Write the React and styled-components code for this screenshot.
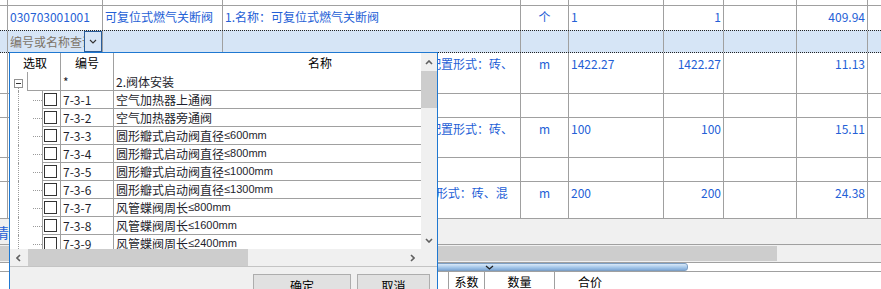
import React from "react";
import styled, { createGlobalStyle } from "styled-components";

const colors = {
  grid: "#a0a0a0",
  blue: "#2460d6",
  ink: "#1e1e2c",
  filter: "#d6e5f6",
  track: "#f0f0f0",
  thumb: "#cdcdcd",
  drop: "#1f78d1",
  dots: "#9a9a9a",
};

const COLS = "8px 95px 120px 298px 48px 95px 60px 73px 71px 1fr";

const GlobalStyle = createGlobalStyle`
  html, body { margin: 0; padding: 0; background: #fff; }
  body {
    font-family: "Noto Sans CJK SC", "Noto Sans", sans-serif;
    font-size: 12px;
    overflow: hidden;
  }
`;

const Screen = styled.div`
  position: relative;
  width: 881px;
  height: 289px;
  overflow: hidden;
  display: flex;
  flex-direction: column;
`;

const Row = styled.div`
  display: grid;
  grid-template-columns: ${COLS};
  flex: none;
  height: ${({ $h }) => $h}px;
  box-sizing: border-box;
  background: ${({ $filter }) => ($filter ? colors.filter : "#fff")};
  border-top: ${({ $filter }) => ($filter ? "1px dotted #222" : "none")};
  border-bottom: ${({ $filter, $noLine }) =>
    $filter ? "1px dotted #222" : $noLine ? "none" : `1px solid ${colors.grid}`};
`;

const Cell = styled.div`
  box-sizing: border-box;
  border-right: ${({ $last }) => ($last ? "none" : `1px solid ${colors.grid}`)};
  padding: 3px 2px 0;
  color: ${colors.blue};
  text-align: ${({ $align }) => $align || "left"};
  white-space: ${({ $wrap }) => ($wrap ? "normal" : "nowrap")};
  word-break: ${({ $wrap }) => ($wrap ? "break-all" : "normal")};
  overflow: hidden;
  line-height: 16px;
`;

const FilterCell = styled.div`
  box-sizing: border-box;
  border-right: 1px solid ${colors.grid};
  display: flex;
  overflow: hidden;
`;

const FilterInput = styled.div`
  width: 76px;
  padding-left: 2px;
  box-sizing: border-box;
  line-height: 21px;
  color: #7d7468;
  white-space: nowrap;
  overflow: hidden;
`;

const FilterButton = styled.div`
  width: 18px;
  box-sizing: border-box;
  border: 1px solid #2a5d9a;
  background: ${colors.filter};
  display: flex;
  align-items: center;
  justify-content: center;
`;

const Band = styled.div`
  flex: none;
  height: 26px;
  box-sizing: border-box;
  background: ${colors.track};
  border-bottom: 1px solid ${colors.grid};
  display: flex;
  align-items: center;
  overflow: hidden;
`;

const TabText = styled.span`
  margin-left: -5px;
  font-size: 14px;
  color: ${colors.blue};
  white-space: nowrap;
`;

const MainScroll = styled.div`
  flex: none;
  height: 17px;
  background: ${colors.track};
  display: flex;
`;

const MainThumb = styled.div`
  width: 777px;
  margin: 1px 0;
  background: ${colors.thumb};
`;

const Splitter = styled.div`
  flex: none;
  height: 10px;
  box-sizing: border-box;
  border-top: 1px solid ${colors.grid};
  border-bottom: 1px solid ${colors.grid};
  background: #fff;
  display: flex;
`;

const SplitBar = styled.div`
  margin-left: 120px;
  width: 568px;
  box-sizing: border-box;
  border: 1px solid #7d9fc4;
  border-radius: 0 3px 3px 0;
  background: linear-gradient(to bottom, #d9e9f8, #a6c8ea 55%, #80aad8);
  display: flex;
  align-items: center;
  padding-left: 364px;
`;

const FootHead = styled.div`
  flex: 1;
  display: grid;
  grid-template-columns: 449px 36px 70px 1fr;
  background: #fff;
`;

const HeadCell = styled.div`
  box-sizing: border-box;
  border-right: ${({ $last }) => ($last ? "none" : `1px solid ${colors.grid}`)};
  color: #000;
  line-height: 20px;
  text-align: ${({ $align }) => $align || "center"};
  padding-left: ${({ $pad }) => $pad || 0}px;
`;

/* dropdown */

const Dropdown = styled.div`
  position: absolute;
  left: 9px;
  top: 52px;
  width: 429px;
  height: 250px;
  box-sizing: border-box;
  border: 1px solid ${colors.drop};
  background: ${colors.track};
  display: flex;
  flex-direction: column;
  overflow: hidden;
`;

const DropBody = styled.div`
  flex: none;
  height: 196px;
  display: flex;
`;

const List = styled.div`
  width: 411px;
  background: #fff;
  overflow: hidden;
  display: flex;
  flex-direction: column;
`;

const ListHead = styled.div`
  flex: none;
  height: 19px;
  display: grid;
  grid-template-columns: 51px 53px 1fr;
  color: #000;
`;

const ListHeadCell = styled.div`
  box-sizing: border-box;
  border-right: ${({ $last }) => ($last ? "none" : `1px solid ${colors.grid}`)};
  line-height: 19px;
  text-align: ${({ $pad }) => ($pad ? "left" : "center")};
  padding-left: ${({ $pad }) => $pad || 0}px;
  white-space: nowrap;
  overflow: hidden;
`;

const TreeRow = styled.div`
  flex: none;
  height: ${({ $h }) => $h}px;
  display: grid;
  grid-template-columns: ${({ $indent }) => `${$indent}px 19px 53px 1fr`};
`;

const RootRow = styled(TreeRow)`
  grid-template-columns: 17px 34px 53px 1fr;
`;

const TreeCell = styled.div`
  box-sizing: border-box;
  border-bottom: 1px solid ${colors.grid};
  border-left: ${({ $first }) => ($first ? `1px solid ${colors.grid}` : "none")};
  border-right: ${({ $last }) => ($last ? "none" : `1px solid ${colors.grid}`)};
  padding-left: 2px;
  line-height: 17px;
  color: ${colors.ink};
  white-space: nowrap;
  overflow: hidden;
  display: flex;
  align-items: center;
`;

const RootIndent = styled.div`
  display: flex;
  flex-direction: column;
  padding: 7px 0 0 4px;
`;

const ExpandBox = styled.div`
  width: 9px;
  height: 9px;
  box-sizing: border-box;
  border: 1px solid #919191;
  background: #fff;
  display: flex;
  align-items: center;
  justify-content: center;
  &::before {
    content: "";
    width: 5px;
    height: 1px;
    background: #333;
  }
`;

const Stem = styled.div`
  flex: 1;
  margin-left: 4px;
  border-left: 1px dotted ${colors.dots};
`;

const ChildIndent = styled.div`
  display: flex;
  align-items: center;
`;

const ChildStem = styled.div`
  align-self: stretch;
  width: 15px;
  margin-left: 8px;
  box-sizing: border-box;
  border-left: 1px dotted ${colors.dots};
`;

const Connector = styled.div`
  width: 9px;
  border-top: 1px dotted ${colors.dots};
`;

const CheckCell = styled(TreeCell)`
  padding-left: 1px;
`;

const Checkbox = styled.div`
  width: 13px;
  height: 13px;
  box-sizing: border-box;
  border: 1px solid #333;
  background: #fff;
`;

const Small = styled.span`
  font-family: "Liberation Sans", Arial, sans-serif;
  font-size: 11px;
`;

const VScroll = styled.div`
  width: 16px;
  background: ${colors.track};
  display: flex;
  flex-direction: column;
`;

const Arrow = styled.div`
  flex: none;
  width: ${({ $w }) => ($w ? `${$w}px` : "auto")};
  height: ${({ $h }) => ($h ? `${$h}px` : "auto")};
  display: flex;
  align-items: center;
  justify-content: center;
`;

const VThumb = styled.div`
  height: 37px;
  background: ${colors.thumb};
`;

const Spacer = styled.div`
  flex: 1;
`;

const HScrollRow = styled.div`
  flex: none;
  height: 17px;
  display: flex;
`;

const HTrack = styled.div`
  width: 411px;
  display: flex;
  background: ${colors.track};
`;

const HThumb = styled.div`
  width: 220px;
  margin-left: 1px;
  background: ${colors.thumb};
`;

const Corner = styled.div`
  width: 16px;
  background: ${colors.track};
`;

const Footer = styled.div`
  flex: 1;
  border-top: 1px solid #c4c4c4;
  display: flex;
  justify-content: flex-end;
  align-items: flex-start;
  gap: 6px;
  padding: 7px 7px 0 0;
`;

const Button = styled.div`
  width: ${({ $w }) => $w}px;
  height: 23px;
  box-sizing: border-box;
  border: 1px solid #adadad;
  background: #e1e1e1;
  color: #000;
  line-height: 21px;
  text-align: center;
`;

const Chevron = ({ dir = "down", color = "#606060", w = 8, h = 5, sw = 1.6 }) => {
  const d = {
    down: `M1 1 L${w / 2} ${h - 1} L${w - 1} 1`,
    up: `M1 ${h - 1} L${w / 2} 1 L${w - 1} ${h - 1}`,
    left: `M${w - 1} 1 L1 ${h / 2} L${w - 1} ${h - 1}`,
    right: `M1 1 L${w - 1} ${h / 2} L1 ${h - 1}`,
  }[dir];
  return (
    <svg width={w} height={h} viewBox={`0 0 ${w} ${h}`}>
      <path d={d} fill="none" stroke={color} strokeWidth={sw} />
    </svg>
  );
};

const P1 = "名称：风管止回阀安装部位及安装方式";
const P2 = P1 + "1";

const mainRows = [
  { h: 6, cells: [] },
  {
    h: 24,
    noLine: true,
    cells: ["", "030703001001", "可复位式燃气关断阀", "1.名称：可复位式燃气关断阀", ["个", "center"], "1", ["1", "right"], "", ["409.94", "right"], ""],
  },
  "filter",
  {
    h: 41,
    cells: ["", "", "", [P1 + "配置形式：砖、混凝土", "left", true], ["m", "center"], "1422.27", ["1422.27", "right"], "", ["11.13", "right"], ""],
  },
  { h: 24, cells: [] },
  {
    h: 40,
    cells: ["", "", "", [P1 + "配置形式：砖、混凝土", "left", true], ["m", "center"], "100", ["100", "right"], "", ["15.11", "right"], ""],
  },
  { h: 24, cells: [] },
  {
    h: 37,
    cells: ["", "", "", [P2 + "形式：砖、混凝土", "left", true], ["m", "center"], "200", ["200", "right"], "", ["24.38", "right"], ""],
  },
];

const items = [
  ["7-3-1", "空气加热器上通阀"],
  ["7-3-2", "空气加热器旁通阀"],
  ["7-3-3", "圆形瓣式启动阀直径", "≤600mm"],
  ["7-3-4", "圆形瓣式启动阀直径", "≤800mm"],
  ["7-3-5", "圆形瓣式启动阀直径", "≤1000mm"],
  ["7-3-6", "圆形瓣式启动阀直径", "≤1300mm"],
  ["7-3-7", "风管蝶阀周长", "≤800mm"],
  ["7-3-8", "风管蝶阀周长", "≤1600mm"],
  ["7-3-9", "风管蝶阀周长", "≤2400mm"],
];

const MainRow = ({ row }) => (
  <Row $h={row.h} $noLine={row.noLine}>
    {Array.from({ length: 10 }).map((_, i) => {
      const c = row.cells[i] || "";
      const [text, align, wrap] = Array.isArray(c) ? c : [c, "left", false];
      return (
        <Cell key={i} $align={align} $wrap={wrap} $last={i === 9}>
          {text}
        </Cell>
      );
    })}
  </Row>
);

const FilterRow = () => (
  <Row $h={23} $filter>
    <Cell $last={false} />
    <FilterCell>
      <FilterInput>编号或名称查询</FilterInput>
      <FilterButton>
        <Chevron dir="down" color="#333" w={8} h={5} sw={1.1} />
      </FilterButton>
    </FilterCell>
    {Array.from({ length: 8 }).map((_, i) => (
      <Cell key={i} $last={i === 7} />
    ))}
  </Row>
);

const Picker = () => (
  <Dropdown>
    <DropBody>
      <List>
        <ListHead>
          <ListHeadCell>选取</ListHeadCell>
          <ListHeadCell>编号</ListHeadCell>
          <ListHeadCell $last $pad={194}>名称</ListHeadCell>
        </ListHead>
        <RootRow $h={19}>
          <RootIndent>
            <ExpandBox />
            <Stem />
          </RootIndent>
          <TreeCell $first />
          <TreeCell>*</TreeCell>
          <TreeCell $last>2.阀体安装</TreeCell>
        </RootRow>
        {items.map(([code, name, size]) => (
          <TreeRow key={code} $h={18} $indent={32}>
            <ChildIndent>
              <ChildStem />
              <Connector />
            </ChildIndent>
            <CheckCell $first>
              <Checkbox />
            </CheckCell>
            <TreeCell>{code}</TreeCell>
            <TreeCell $last>
              {name}
              {size && <Small>{size}</Small>}
            </TreeCell>
          </TreeRow>
        ))}
      </List>
      <VScroll>
        <Arrow $h={18}>
          <Chevron dir="up" />
        </Arrow>
        <VThumb />
        <Spacer />
        <Arrow $h={18}>
          <Chevron dir="down" />
        </Arrow>
      </VScroll>
    </DropBody>
    <HScrollRow>
      <HTrack>
        <Arrow $w={17}>
          <Chevron dir="left" w={5} h={8} />
        </Arrow>
        <HThumb />
        <Spacer />
        <Arrow $w={18}>
          <Chevron dir="right" w={5} h={8} />
        </Arrow>
      </HTrack>
      <Corner />
    </HScrollRow>
    <Footer>
      <Button $w={98}>确定</Button>
      <Button $w={73}>取消</Button>
    </Footer>
  </Dropdown>
);

export default function App() {
  return (
    <>
      <GlobalStyle />
      <Screen>
        {mainRows.map((row, i) =>
          row === "filter" ? <FilterRow key={i} /> : <MainRow key={i} row={row} />
        )}
        <Band>
          <TabText>清单</TabText>
        </Band>
        <MainScroll>
          <MainThumb />
        </MainScroll>
        <Splitter>
          <SplitBar>
            <Chevron dir="down" color="#222" w={9} h={5} sw={1.3} />
          </SplitBar>
        </Splitter>
        <FootHead>
          <HeadCell />
          <HeadCell>系数</HeadCell>
          <HeadCell>数量</HeadCell>
          <HeadCell $last $align="left" $pad={23}>合价</HeadCell>
        </FootHead>
        <Picker />
      </Screen>
    </>
  );
}
